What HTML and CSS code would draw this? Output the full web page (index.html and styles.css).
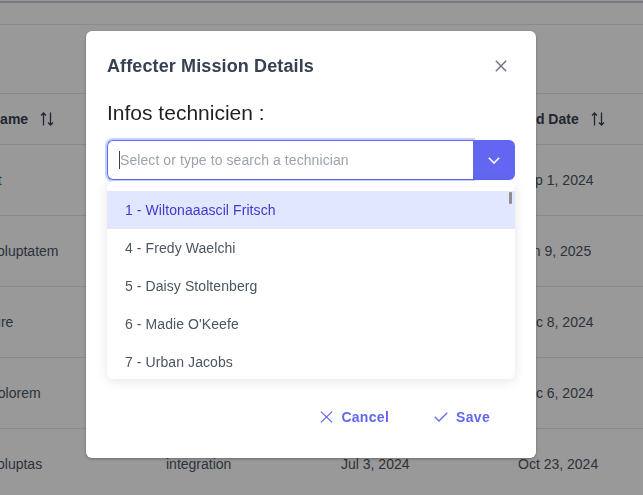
FILE: index.html
```html
<!DOCTYPE html>
<html lang="fr">
<head>
<meta charset="utf-8">
<title>Affecter Mission Details</title>
<link rel="stylesheet" href="styles.css">
</head>
<body>
<div class="page">
  <div class="topline"></div>
  <div class="toolbar"></div>
  <div class="filters"></div>
  <div class="table">
    <div class="row head">
      <div class="cell"><span>Name</span><svg class="sort" width="14" height="14" viewBox="0 0 14 14"><path d="M3.5 13.5V1M1 3.5L3.5 1L6 3.5M10.5 0.5V13M8 10.5L10.5 13L13 10.5" stroke="currentColor" stroke-width="1.3" fill="none"/></svg></div>
      <div class="cell"><span>Type</span></div>
      <div class="cell"><span>Start Date</span></div>
      <div class="cell"><span>End Date</span><svg class="sort" width="14" height="14" viewBox="0 0 14 14"><path d="M3.5 13.5V1M1 3.5L3.5 1L6 3.5M10.5 0.5V13M8 10.5L10.5 13L13 10.5" stroke="currentColor" stroke-width="1.3" fill="none"/></svg></div>
    </div>
    <div class="row"><div class="cell">et</div><div class="cell">maintenance</div><div class="cell">May 2, 2024</div><div class="cell">Sep 1, 2024</div></div>
    <div class="row"><div class="cell">voluptatem</div><div class="cell">installation</div><div class="cell">Mar 14, 2024</div><div class="cell">Jan 9, 2025</div></div>
    <div class="row"><div class="cell">iure</div><div class="cell">repair</div><div class="cell">Jun 20, 2024</div><div class="cell">Dec 8, 2024</div></div>
    <div class="row"><div class="cell">dolorem</div><div class="cell">audit</div><div class="cell">Aug 11, 2024</div><div class="cell">Dec 6, 2024</div></div>
    <div class="row"><div class="cell">voluptas</div><div class="cell">integration</div><div class="cell">Jul 3, 2024</div><div class="cell">Oct 23, 2024</div></div>
  </div>
</div>

<div class="overlay"></div>

<div class="dialog">
  <div class="dialog-header">
    <h2 class="dialog-title">Affecter Mission Details</h2>
    <button class="close-btn" type="button" aria-label="Close">
      <svg width="12" height="12" viewBox="0 0 12 12"><path d="M0.8 0.8L11.2 11.2M11.2 0.8L0.8 11.2" stroke="#6b7280" stroke-width="1.4" fill="none"/></svg>
    </button>
  </div>
  <div class="dialog-body">
    <div class="field-label">Infos technicien :</div>
    <div class="select">
      <div class="select-input"><span class="caret"></span><span class="placeholder">Select or type to search a technician</span></div>
      <div class="select-btn">
        <svg width="12" height="7" viewBox="0 0 12 7"><path d="M0.8 0.8L6 6L11.2 0.8" stroke="#ffffff" stroke-width="1.6" fill="none"/></svg>
      </div>
      <div class="panel">
        <ul class="options">
          <li class="option active">1 - Wiltonaaascil Fritsch</li>
          <li class="option">4 - Fredy Waelchi</li>
          <li class="option">5 - Daisy Stoltenberg</li>
          <li class="option">6 - Madie O'Keefe</li>
          <li class="option">7 - Urban Jacobs</li>
          <li class="option">8 - Lela Kunze</li>
        </ul>
        <div class="thumb"></div>
      </div>
    </div>
  </div>
  <div class="dialog-footer">
    <button class="text-btn" type="button">
      <svg width="13" height="12" viewBox="0 0 13 12"><path d="M0.9 0.6L12.1 11.4M12.1 0.6L0.9 11.4" stroke="#6366f1" stroke-width="1.3" fill="none"/></svg>
      <span>Cancel</span>
    </button>
    <button class="text-btn" type="button">
      <svg width="14" height="10" viewBox="0 0 14 10"><path d="M0.8 4.8L5 9L13.2 0.8" stroke="#6366f1" stroke-width="1.3" fill="none"/></svg>
      <span>Save</span>
    </button>
  </div>
</div>
</body>
</html>
```

FILE: styles.css
```css
* { box-sizing: border-box; }
html, body { margin: 0; padding: 0; }
body {
  width: 643px;
  height: 495px;
  overflow: hidden;
  background: #ffffff;
  font-family: "Liberation Sans", Arial, sans-serif;
  position: relative;
}

.page { width: 643px; overflow: hidden; }
.topline { height: 3px; border-bottom: 2px solid #c7ccd4; }
.toolbar { height: 22px; border-bottom: 1px solid #e5e7eb; }
.filters { height: 69px; border-bottom: 1px solid #e5e7eb; }

.table { margin-left: -26px; }
.row {
  display: grid;
  grid-template-columns: 176px 175px 177px 160px;
  height: 71px;
  border-bottom: 1px solid #e5e7eb;
  align-items: center;
  font-size: 14px;
  color: #4b5563;
}
.row.head {
  height: 51px;
  font-weight: bold;
  color: #374151;
}
.cell {
  padding-left: 16px;
  white-space: nowrap;
  display: flex;
  align-items: center;
  gap: 12px;
}
.sort { color: #374151; flex: none; }

.overlay {
  position: fixed;
  inset: 0;
  background: rgba(0, 0, 0, 0.4);
}

.dialog {
  position: absolute;
  left: 86px;
  top: 31px;
  width: 450px;
  height: 427px;
  background: #ffffff;
  border-radius: 6px;
  box-shadow: 0 1px 3px rgba(0,0,0,0.3);
  display: flex;
  flex-direction: column;
}
.dialog-header {
  display: flex;
  align-items: center;
  justify-content: space-between;
  padding: 19px 19px 0 21px;
  height: 51px;
}
.dialog-title {
  margin: 0;
  font-size: 18px;
  line-height: 22px;
  font-weight: bold;
  letter-spacing: 0.12px;
  color: #374151;
}
.close-btn {
  width: 32px;
  height: 32px;
  border: 0;
  background: transparent;
  padding: 0;
  display: flex;
  align-items: center;
  justify-content: center;
}

.dialog-body { padding: 19px 21px 0 21px; }
.field-label {
  font-size: 21px;
  line-height: 24px;
  color: #1f2023;
  margin-bottom: 15px;
}
.select {
  position: relative;
  display: flex;
  height: 40px;
}
.select-input {
  flex: 1;
  display: flex;
  align-items: center;
  padding-left: 11px;
  border: 1px solid #6366f1;
  border-right: 0;
  border-radius: 6px 0 0 6px;
  box-shadow: 0 0 0 2px #c7d2fe;
  font-size: 14px;
}
.caret {
  width: 1px;
  height: 18px;
  background: #374151;
}
.placeholder { color: #9ca3af; white-space: nowrap; letter-spacing: 0.08px; }
.select-btn {
  width: 42px;
  background: #6366f1;
  border-radius: 0 6px 6px 0;
  display: flex;
  align-items: center;
  justify-content: center;
  position: relative;
}
.panel {
  position: absolute;
  left: 0;
  right: 0;
  top: 41px;
  height: 198px;
  background: #ffffff;
  border-radius: 6px;
  box-shadow: 0 2px 12px rgba(0,0,0,0.1);
  overflow: hidden;
  padding-top: 10px;
  z-index: 2;
}
.options { list-style: none; margin: 0; padding: 0; }
.option {
  height: 38px;
  line-height: 38px;
  padding-left: 18px;
  font-size: 14px;
  letter-spacing: 0.08px;
  color: #4b5563;
}
.option.active { background: #e0e7ff; color: #4338ca; }
.thumb {
  position: absolute;
  right: 3px;
  top: 11px;
  width: 3px;
  height: 12px;
  background: #8d8d8d;
  border-radius: 1px;
}

.dialog-footer {
  margin-top: auto;
  display: flex;
  justify-content: flex-end;
  gap: 13px;
  padding: 0 30px 21px 0;
}
.text-btn {
  height: 40px;
  border: 0;
  background: transparent;
  padding: 0 16px;
  display: flex;
  align-items: center;
  gap: 8px;
  font-family: "Liberation Sans", Arial, sans-serif;
  font-size: 14px;
  font-weight: bold;
  letter-spacing: 0.3px;
  color: #6366f1;
}
```
